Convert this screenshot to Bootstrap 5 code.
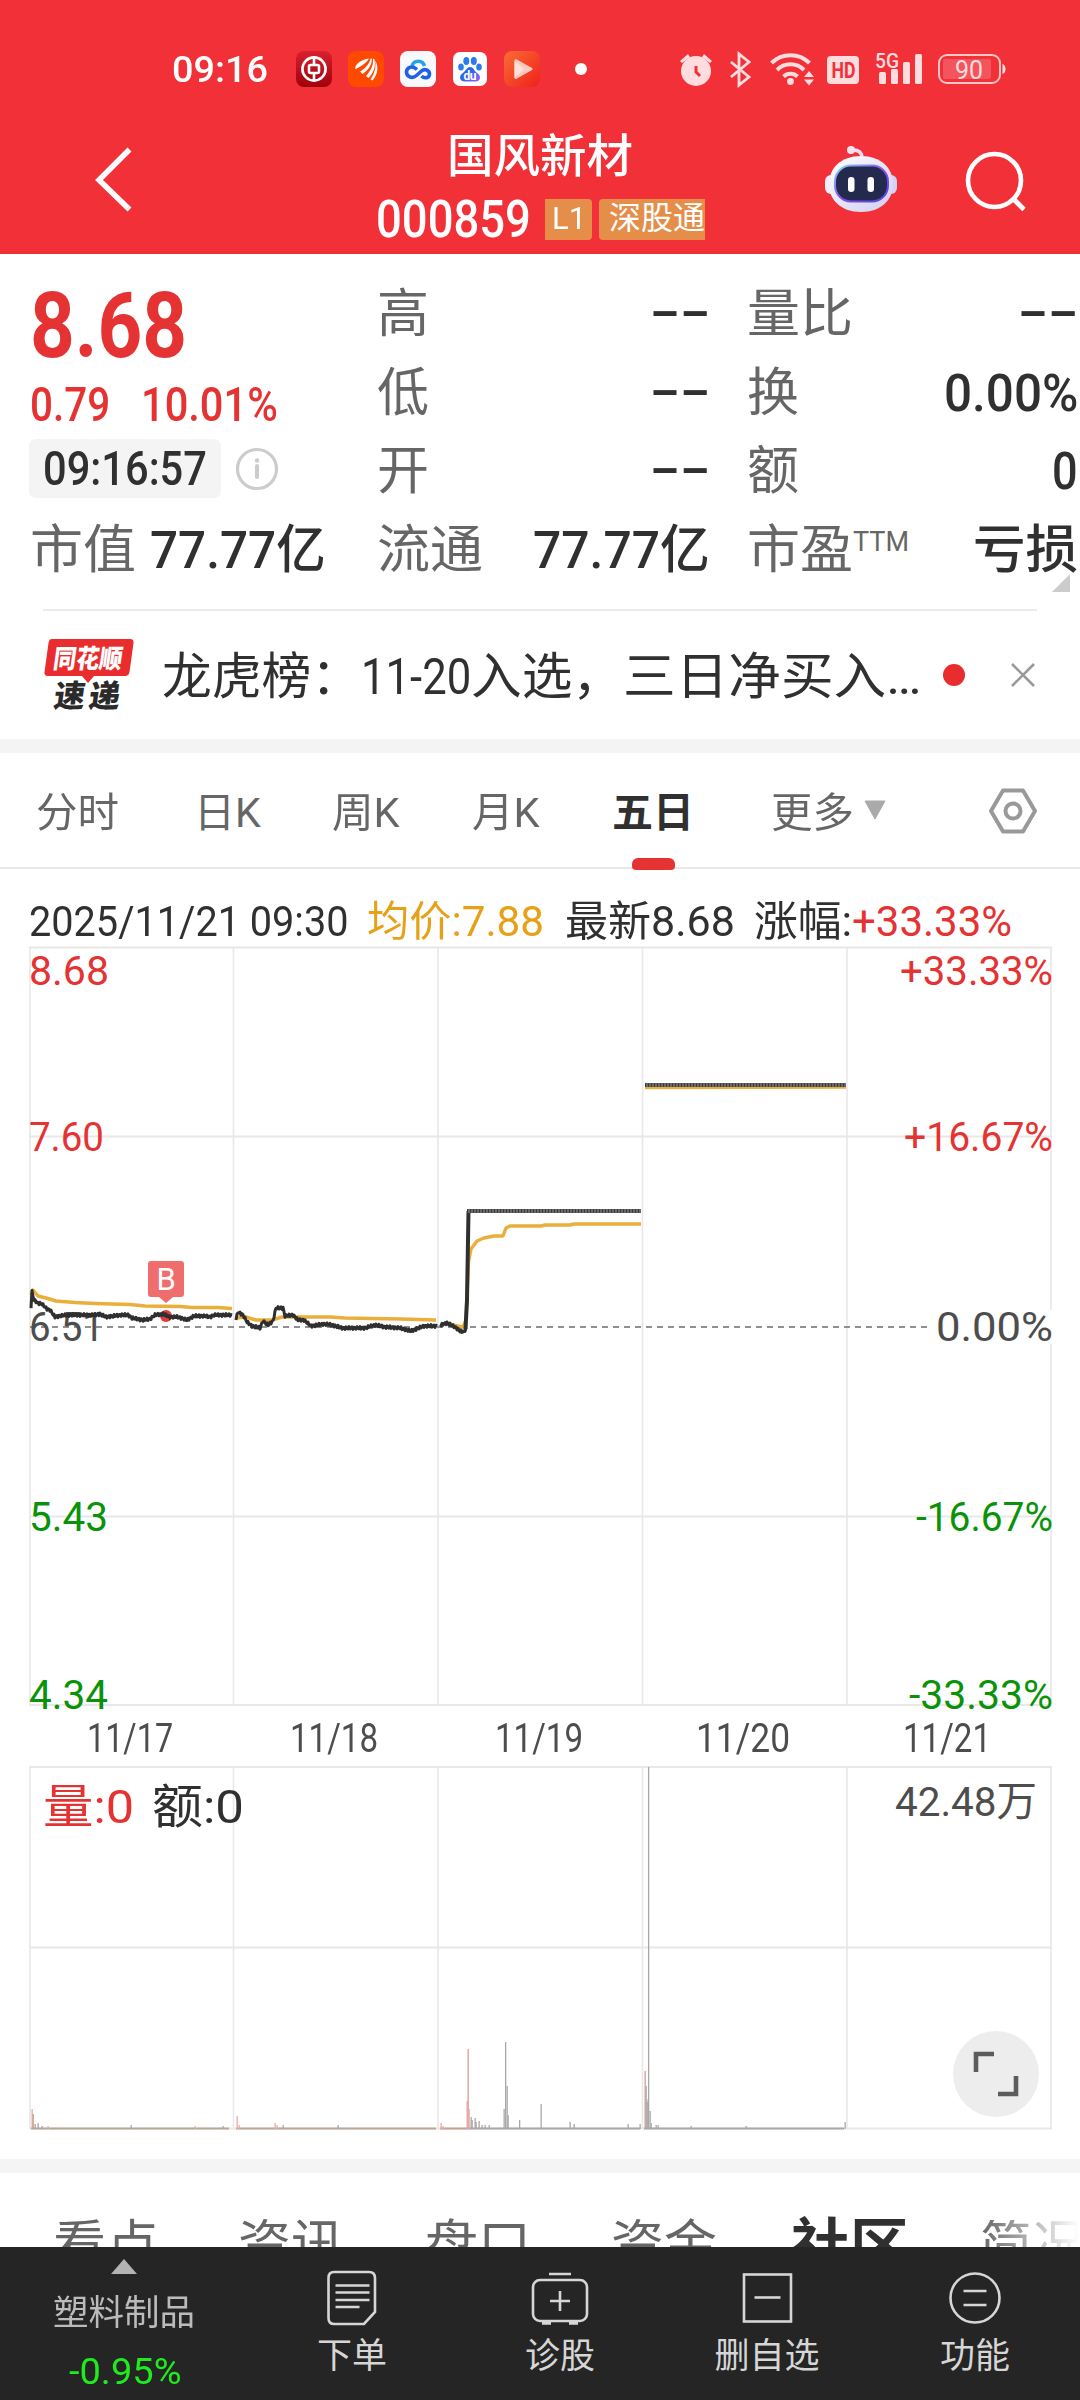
<!DOCTYPE html>
<html lang="zh-CN">
<head>
  <meta charset="UTF-8">
  <meta name="viewport" content="width=device-width, initial-scale=1">
  <title>国风新材 000859</title>
  <link href="https://cdn.jsdelivr.net/npm/bootstrap@5.3.0/dist/css/bootstrap.min.css" rel="stylesheet">
  <style>
    body {
      width: 1080px;
      height: 2400px;
      overflow: hidden;
      background: #fff;
      color: #303030;
      font-family: Roboto, "Noto Sans CJK SC", sans-serif;
      line-height: 1;
    }
    svg { display: block; flex: none; overflow: visible; }
    svg text { font-family: Roboto, "Noto Sans CJK SC", sans-serif; }

    /* text squeezed or stretched to the width in data-w */
    .fit {
      display: inline-block;
      flex: none;
      white-space: nowrap;
    }
    .up { color: #e53232; }
    .avg { color: #e6a117; }
    .muted { color: #666; }

    .top-bar { background: #f13038; height: 254px; color: #fff; }
    .status { height: 138px; padding-left: 172px; }
    .status .clock { font-size: 37px; font-weight: 500; margin-right: 28px; }
    .status .apps { gap: 16px; }
    .title-row { height: 116px; display: grid; grid-template-columns: 360px 360px 360px; }
    .stock-name { font-size: 46px; font-weight: 500; line-height: 48px; margin-top: -6px; }
    .stock-code { height: 42px; margin-top: 18px; }
    .stock-code .num { font-size: 51px; font-weight: 500; }
    .tag { background: #e48e49; height: 41px; font-size: 32px; line-height: 39px; padding-left: 7px; }

    .quote { height: 355px; padding: 22px 2px 0 30px; display: grid; grid-template-columns: 296px 334px 318px; column-gap: 50px; }
    .quote .col-c { margin-left: 1px; }
    .quote .col-r { margin-left: -13px; }
    .quote .line { height: 78.5px; display: flex; align-items: center; justify-content: space-between; }
    .quote .lbl { font-size: 52px; color: #666; }
    .quote .val { font-size: 52px; font-weight: 500; color: #303030; }
    .quote .dash { margin-top: -6px; }
    .price { font-size: 91px; font-weight: 700; height: 103px; padding-bottom: 3px; }
    .chg { font-size: 48px; font-weight: 500; height: 46px; gap: 31px; padding-top: 5px; }
    .time-row { height: 87px; gap: 15px; }
    .time-chip { width: 192px; height: 59px; margin-left: -1px; padding-left: 14px; border-radius: 7px; background: #f4f4f4; font-size: 49px; font-weight: 500; }
    .corner { position: absolute; right: 10px; top: 574px; }

    .news { height: 130px; margin: 0 43px; border-top: 2px solid #ebebeb; }
    .news .txt { font-size: 50px; margin: 4px 0 0 27px; }
    .strip { height: 14px; background: #f4f4f4; }

    .tabs { height: 116px; border-bottom: 2px solid #e8e8e8; padding: 6px 0 0 36px; font-size: 41px; color: #666; }
    .tabs .on { color: #303030; font-weight: 700; }
    .tabs .on::after { content: ""; position: absolute; left: 20px; bottom: -36px; width: 43px; height: 12px; border-radius: 6px 6px 4px 4px; background: #e53232; }

    .legend-row { height: 77px; padding: 28px 0 0 29px; font-size: 42px; }
    .dates { height: 60px; padding: 4px 31px 0 28px; font-size: 41px; color: #4d4d4d; }

    .sections { height: 74px; overflow: hidden; font-size: 52px; color: #666; padding: 47px 0 0 53px; }
    .sections .on { color: #303030; font-weight: 700; font-size: 58px; margin-top: -3px; }
    .fade-out { -webkit-mask-image: linear-gradient(90deg, #000, transparent 95%); mask-image: linear-gradient(90deg, #000, transparent 95%); }

    .dock { height: 153px; background: #252525; color: #d6d6d6; font-size: 35px; }
    .dock .cell { display: flex; flex-direction: column; align-items: center; }
    .dock .pct { color: #1fec1f; font-size: 37px; }
  </style>
</head>
<body>

  <header class="top-bar">
    <div class="status d-flex align-items-center">
      <span class="fit clock" data-w="96">09:16</span>
      <div class="apps d-flex">
        <svg width="36" height="36" viewBox="0 0 36 36">
          <defs><linearGradient id="boc" x2="0" y2="1"><stop offset="0" stop-color="#d9202f"/><stop offset="1" stop-color="#a0000c"/></linearGradient></defs>
          <rect width="36" height="36" rx="8" fill="url(#boc)"/>
          <g fill="none" stroke="#fff" stroke-width="2.6"><circle cx="18" cy="18" r="11.6"/><rect x="13" y="14" width="10" height="8" rx="1.5"/><path d="M18 6v8M18 22v8"/></g>
        </svg>
        <svg width="36" height="36" viewBox="0 0 36 36">
          <rect width="36" height="36" rx="8" fill="#ff4800"/>
          <g fill="#fff"><path d="M7 17.500C8 12 14 8.500 21 7.500 18 12.500 14 14.500 8 18z"/><path d="M12 20.500C18 17 21.500 12.500 22.500 7.500l1.500 0C24 14 20 19.500 14.500 23z"/><path d="M18 25C23 19.500 25.500 14 25 7.500l1.500.8C28 15.500 25.500 22 20.500 27z"/><path d="M22.500 28.500C27 22 28 16 27.300 9.500 31 16 29.500 24 24.500 29.500z"/></g>
        </svg>
        <svg width="36" height="36" viewBox="0 0 36 36">
          <rect width="36" height="36" rx="8" fill="#f9f9fb"/>
          <path d="M12 15a6.500 6.500 0 0 1 12.500 0" fill="none" stroke="#22a3ee" stroke-width="3.600"/>
          <path d="M17 19.500c-5.500-5-10.500-1.500-10.500 2.500 0 5 6 7 10 3.500l5-4.500c3-2.800 8-1 8 3 0 4-5 5-8 2" transform="translate(0 -1)" fill="none" stroke="#1f62e6" stroke-width="3.600"/>
        </svg>
        <svg width="36" height="36" viewBox="0 0 36 36">
          <defs><linearGradient id="paw" x2="1" y2="1"><stop offset=".4" stop-color="#2468ec"/><stop offset="1" stop-color="#a55cf0"/></linearGradient></defs>
          <rect x="1" y="1" width="34" height="34" rx="7" fill="#fff"/>
          <g fill="#2b7bee"><ellipse cx="9" cy="16" rx="2.800" ry="3.600"/><ellipse cx="14.300" cy="10" rx="3" ry="3.900"/><ellipse cx="21.800" cy="10" rx="3" ry="3.900"/><ellipse cx="27" cy="16" rx="2.800" ry="3.600"/></g>
          <path d="M18 16c3 0 4 3 6 5s4 3 4 5.500c0 3-2.500 4-5 4H13c-3 0-5-1.500-5-4s2-4 4-5.500 3-5 6-5z" fill="url(#paw)"/>
          <text x="11.500" y="29" font-size="12" font-weight="700" fill="#fff" textLength="13">du</text>
        </svg>
        <svg width="36" height="36" viewBox="0 0 36 36">
          <defs><linearGradient id="vid" x2="1" y2="1"><stop offset="0" stop-color="#fb6c35"/><stop offset="1" stop-color="#ee211c"/></linearGradient></defs>
          <rect width="36" height="36" rx="8" fill="url(#vid)"/>
          <path d="M12 8l16 9q1.500 1 0 2l-16 9q-1.500 0-1.500-1.500V9.500Q10.500 8 12 8z" fill="#ffc9be"/><path d="M10.500 10l9.500 8-9.500 9z" fill="#ffe1d8"/>
        </svg>
      </div>
      <svg width="12" height="12" style="margin-left:35px"><circle cx="6" cy="6" r="6" fill="#fff"/></svg>
      <svg width="330" height="40" viewBox="678 49 330 40" style="margin-left:91px">
        <g fill="#ffdcde">
          <circle cx="696" cy="71" r="15"/>
          <path d="M680 61l8-7 2 3-8 6zM712 61l-8-7-2 3 8 6z"/>
          <path d="M696 66v6l4 4" fill="none" stroke="#f13038" stroke-width="3"/>
          <path d="M731 62l18 15-10 8V54l10 8-18 15" fill="none" stroke="#ffdcde" stroke-width="2.800"/>
          <g fill="none" stroke="#ffdcde" stroke-width="4"><path d="M771.500 63a27 27 0 0 1 38 0"/><path d="M777 70a19 19 0 0 1 27 0"/><path d="M783.500 76.500a10 10 0 0 1 14 0"/></g>
          <circle cx="790.500" cy="81.500" r="3.400"/>
          <path d="M804 77l5-6 5 6zM804 79.500h10l-5 6z"/>
          <rect x="827" y="56" width="32" height="28" rx="4"/>
          <text x="831.500" y="77.800" font-size="22" font-weight="700" fill="#f13038" textLength="24" lengthAdjust="spacingAndGlyphs">HD</text>
          <text x="875" y="67.500" font-size="21" font-weight="500" textLength="24" lengthAdjust="spacingAndGlyphs">5G</text>
          <rect x="879" y="72" width="7" height="12" rx="1.500"/><rect x="891" y="69" width="7" height="15" rx="1.500"/><rect x="903" y="62" width="7" height="22" rx="1.500"/><rect x="915" y="54" width="7" height="30" rx="1.500"/>
          <rect x="939" y="55" width="61" height="28" rx="8" fill="none" stroke="#ffc4c6" stroke-width="2"/>
          <rect x="943" y="59" width="48" height="20" rx="2" fill="#f4545b"/>
          <path d="M1002.500 64q3 1 3 5t-3 5z"/>
          <text x="955" y="78.500" font-size="26" textLength="28" lengthAdjust="spacingAndGlyphs">90</text>
        </g>
      </svg>
    </div>

    <div class="title-row">
      <div style="padding:9px 0 0 95px">
        <svg width="38" height="66" viewBox="95 147 38 66"><path d="M129.500 149.500L99 180l30.500 29.500" fill="none" stroke="#fff" stroke-width="5.500"/></svg>
      </div>
      <div class="text-center">
        <div class="stock-name"><span class="fit" data-w="186">国风新材</span></div>
        <div class="stock-code d-flex align-items-center" style="padding-left:16px">
          <span class="fit num" data-w="155">000859</span>
          <span class="tag rounded-end-1" style="width:47px;margin-left:14px;text-align:left"><span class="fit" data-w="34">L1</span></span>
          <span class="tag rounded-start-1" style="width:106px;margin-left:7px;padding-left:10px;text-align:left"><span class="fit" data-w="96">深股通</span></span>
        </div>
      </div>
      <div class="d-flex">
        <svg width="74" height="72" viewBox="824 143 74 72" style="margin:5px 0 0 104px">
          <defs>
            <linearGradient id="shell" x2="1" y2="1"><stop offset="0" stop-color="#fff"/><stop offset="1" stop-color="#cfcdf0"/></linearGradient>
            <linearGradient id="rim" x2="1" y2="1"><stop offset="0" stop-color="#7fdcf0"/><stop offset=".5" stop-color="#8a4cf0"/><stop offset="1" stop-color="#4f46d8"/></linearGradient>
          </defs>
          <path d="M862 158q0-8-9-8" fill="none" stroke="#ecdcf0" stroke-width="3.500"/><circle cx="851" cy="150" r="4" fill="#f4e4f0"/>
          <rect x="825" y="175" width="14" height="19" rx="6" fill="#f0eefc"/><rect x="883" y="175" width="14" height="19" rx="6" fill="#d4d2f4"/>
          <path d="M861 156c20 0 32 12 32 28s-12 28-32 28-32-12-32-28 12-28 32-28z" fill="url(#shell)"/>
          <rect x="835" y="165.500" width="53" height="36" rx="16" fill="#232a4d" stroke="url(#rim)" stroke-width="2"/>
          <rect x="848" y="177" width="6.500" height="15" rx="3.200" fill="#fff"/><rect x="867.500" y="177" width="6.500" height="15" rx="3.200" fill="#fff"/>
        </svg>
        <svg width="64" height="64" viewBox="964 150 64 64" style="margin:12px 0 0 66px"><g fill="none" stroke="#fff" stroke-width="4.600"><circle cx="994.500" cy="180.500" r="26.500"/><path d="M1013 198.500l11 11" stroke-width="4.800"/></g></svg>
      </div>
    </div>
  </header>

  <section class="quote">
    <div>
      <div class="price up d-flex align-items-center"><span class="fit" data-w="157">8.68</span></div>
      <div class="chg up d-flex align-items-center"><span class="fit" data-w="80">0.79</span><span class="fit" data-w="137">10.01%</span></div>
      <div class="time-row d-flex align-items-center">
        <div class="time-chip d-flex align-items-center"><span class="fit" data-w="164">09:16:57</span></div>
        <svg width="42" height="44" viewBox="0 0 42 44"><circle cx="21" cy="22" r="19.500" fill="none" stroke="#ccc" stroke-width="3.200"/><circle cx="21" cy="13.500" r="2.200" fill="#ccc"/><path d="M21 19v11" stroke="#ccc" stroke-width="4" stroke-linecap="round"/></svg>
      </div>
      <div class="line"><span class="fit lbl" data-w="106">市值</span><span class="fit val" data-w="176">77.77亿</span></div>
    </div>
    <div class="col-c">
      <div class="line"><span class="lbl">高</span><span class="fit val dash" data-w="60">--</span></div>
      <div class="line"><span class="lbl">低</span><span class="fit val dash" data-w="60">--</span></div>
      <div class="line"><span class="lbl">开</span><span class="fit val dash" data-w="60">--</span></div>
      <div class="line"><span class="fit lbl" data-w="106">流通</span><span class="fit val" data-w="177">77.77亿</span></div>
    </div>
    <div class="col-r">
      <div class="line"><span class="fit lbl" data-w="106">量比</span><span class="fit val dash" data-w="60">--</span></div>
      <div class="line"><span class="lbl">换</span><span class="fit val" data-w="134">0.00%</span></div>
      <div class="line"><span class="lbl">额</span><span class="fit val" data-w="26">0</span></div>
      <div class="line"><span class="d-flex"><span class="fit lbl" data-w="106">市盈</span><span class="muted" style="font-size:27px;margin-top:4px">TTM</span></span><span class="fit val" data-w="105">亏损</span></div>
    </div>
    <svg class="corner" width="18" height="18"><path d="M18 0v18H0z" fill="#ccc"/></svg>
  </section>

  <section class="news d-flex align-items-center">
    <svg width="92" height="76" viewBox="42 636 92 76">
      <path d="M51 638h78q4 0 3.500 4l-4 29q-.6 4-4.500 4H93l-6 7-6-7H47q-4 0-3.500-4l4-29q.6-4 3.500-4z" fill="#e92c2e"/>
      <g transform="skewX(-8)" font-weight="900">
        <text x="145" y="667" font-size="26" fill="#fff" textLength="69" lengthAdjust="spacingAndGlyphs">同花顺</text>
        <text x="151" y="706" font-size="31" fill="#2b2b2b" textLength="66">速递</text>
      </g>
    </svg>
    <div class="txt d-flex"><span class="fit" data-w="199">龙虎榜：</span><span class="fit" data-w="110">11-20</span><span class="fit" data-w="152">入选，</span><span class="fit" data-w="298">三日净买入…</span></div>
    <svg width="22" height="22" style="margin-left:22px"><circle cx="11" cy="11" r="11" fill="#e92c2e"/></svg>
    <svg width="24" height="24" style="margin-left:46px"><path d="M1 1l22 22M23 1L1 23" stroke="#999" stroke-width="2.600"/></svg>
  </section>

  <div class="strip"></div>

  <nav class="tabs d-flex align-items-center">
    <span class="fit" data-w="83">分时</span>
    <span class="fit" style="margin-left:75px" data-w="67">日K</span>
    <span class="fit" style="margin-left:71px" data-w="68">周K</span>
    <span class="fit" style="margin-left:72px" data-w="68">月K</span>
    <span class="on position-relative" style="margin-left:72px">五日</span>
    <span class="fit" style="margin-left:77px" data-w="83">更多</span>
    <svg width="22" height="20" style="margin-left:10px;margin-top:-6px"><path d="M1 1h20L11 19z" fill="#aaa" stroke="#aaa"/></svg>
    <svg width="50" height="48" viewBox="0 0 50 48" style="margin-left:102px;margin-top:-4px"><g fill="none" stroke="#999" stroke-width="4"><path d="M15 3.500h20L47 24 35 44.500H15L3 24z" stroke-linejoin="round"/><circle cx="25" cy="24" r="7.500"/></g></svg>
  </nav>

  <div class="legend-row d-flex align-items-center">
    <span class="fit" data-w="320">2025/11/21 09:30</span>
    <span class="fit avg" style="margin-left:18px" data-w="177">均价:7.88</span>
    <span class="fit" style="margin-left:21px" data-w="170">最新8.68</span>
    <span class="fit" style="margin-left:19px" data-w="98">涨幅:</span>
    <span class="fit up" data-w="160">+33.33%</span>
  </div>

  <svg width="1080" height="760" viewBox="0 946 1080 760" id="priceChart">
    <g stroke="#e8e8e8" stroke-width="2" fill="none" id="priceGrid">
      <path d="M29 947.500H1052M29 1136.500H1052M29 1516.500H1052M29 1705H1052"/>
      <path d="M30 947V1705M233.500 947V1705M438 947V1705M642.500 947V1705M847 947V1705M1051 947V1705" stroke-width="1.600"/>
    </g>
    <path d="M30 1327H1051" stroke="#909090" stroke-width="1.800" stroke-dasharray="6 5"/>
    <g font-size="40" fill="#e53232">
      <text x="29" y="985" textLength="80" lengthAdjust="spacingAndGlyphs">8.68</text>
      <text x="29" y="1151" textLength="75" lengthAdjust="spacingAndGlyphs">7.60</text>
      <text x="29" y="1341" fill="#4d4d4d" textLength="75" lengthAdjust="spacingAndGlyphs">6.51</text>
      <text x="29" y="1531" fill="#0a930a" textLength="79" lengthAdjust="spacingAndGlyphs">5.43</text>
      <text x="29" y="1709" fill="#0a930a" textLength="79" lengthAdjust="spacingAndGlyphs">4.34</text>
      <text x="900" y="985" textLength="153" lengthAdjust="spacingAndGlyphs">+33.33%</text>
      <text x="904" y="1151" textLength="149" lengthAdjust="spacingAndGlyphs">+16.67%</text>
      <rect x="932" y="1310" width="122" height="34" fill="#fff"/>
      <text x="936" y="1341" fill="#4d4d4d" textLength="117" lengthAdjust="spacingAndGlyphs">0.00%</text>
      <text x="916" y="1531" fill="#0a930a" textLength="137" lengthAdjust="spacingAndGlyphs">-16.67%</text>
      <text x="909" y="1709" fill="#0a930a" textLength="144" lengthAdjust="spacingAndGlyphs">-33.33%</text>
    </g>
    <g fill="none" stroke="#e9af3a" stroke-width="3.400" stroke-linejoin="round">
      <path d="M31 1295L33 1290L38 1296L46 1298L56 1301L75 1302.500L95 1303.500L130 1304.500L145 1306L180 1306.500L192 1307.500L218 1307.500L232 1308.500"/>
      <path d="M236 1318L246 1317L256 1320L272 1320L282 1317L330 1317L345 1318L400 1319L436 1320"/>
      <path d="M447 1324L463 1327L466 1320L468.500 1262L471 1249L477 1241L484 1238L494 1236L503 1236L506 1228L510 1226L541 1226L545 1225L570 1225L574 1224L641 1224"/>
      <path d="M645 1087.500L846 1087"/>
    </g>
    <circle cx="166" cy="1316" r="6" fill="#e23b3b"/>
    <g fill="none" stroke="#2f2f2f" stroke-width="3" stroke-linejoin="round" id="ticks"></g>
    <path d="M465.500 1329L467 1300L468.500 1211" fill="none" stroke="#2f2f2f" stroke-width="4"/>
    <g stroke="#686868" stroke-width="4"><path d="M467 1211H641"/><path d="M645 1085H846"/></g>
    <g stroke="#3c3c3c" stroke-width="4" stroke-dasharray="1 2"><path d="M467 1211H641"/><path d="M645 1085H846"/></g>
    <path d="M151 1261h30q3 0 3 3v30q0 3-3 3h-8l-7 6-7-6h-8q-3 0-3-3v-30q0-3 3-3z" fill="#f06d6e"/>
    <text x="156.500" y="1290" font-size="31" fill="#fff">B</text>
  </svg>

  <div class="dates d-flex align-items-center text-center">
    <div class="flex-fill w-100"><span class="fit" data-w="86">11/17</span></div>
    <div class="flex-fill w-100"><span class="fit" data-w="88">11/18</span></div>
    <div class="flex-fill w-100"><span class="fit" data-w="88">11/19</span></div>
    <div class="flex-fill w-100"><span class="fit" data-w="94">11/20</span></div>
    <div class="flex-fill w-100"><span class="fit" data-w="88">11/21</span></div>
  </div>

  <svg width="1080" height="393" viewBox="0 1766 1080 393">
    <g stroke="#e8e8e8" stroke-width="2" fill="none">
      <path d="M29 1767H1052M29 1947.500H1052M29 2128.500H1052"/>
      <path d="M30 1767V2129M233.500 1767V2129M438 1767V2129M642.500 1767V2129M847 1767V2129M1051 1767V2129" stroke-width="1.600"/>
    </g>
    <g id="volume"></g>
    <text x="43" y="1823" font-size="47" fill="#e53232" textLength="91" lengthAdjust="spacingAndGlyphs">量:0</text>
    <text x="152" y="1823" font-size="47" fill="#303030" textLength="92" lengthAdjust="spacingAndGlyphs">额:0</text>
    <text x="895" y="1816" font-size="41" fill="#4d4d4d" textLength="142" lengthAdjust="spacingAndGlyphs">42.48万</text>
    <circle cx="996" cy="2074" r="43" fill="#ededed"/>
    <path d="M976 2072V2054H994M998 2094H1016V2076" fill="none" stroke="#5c5c5c" stroke-width="4.600"/>
  </svg>

  <div class="strip"></div>

  <nav class="sections d-flex align-items-start">
    <span class="fit" data-w="106">看点</span>
    <span class="fit" style="margin-left:79px" data-w="106">资讯</span>
    <span class="fit" style="margin-left:81px" data-w="106">盘口</span>
    <span class="fit" style="margin-left:80px" data-w="106">资金</span>
    <span class="fit on" style="margin-left:74px" data-w="118">社区</span>
    <span class="fit fade-out" style="margin-left:71px" data-w="104">简况</span>
  </nav>

  <footer class="dock d-flex">
    <div class="cell" style="width:248px;color:#bbb;padding-top:12px">
      <svg width="26" height="15"><path d="M13 0l13 15H0z" fill="#b3b3b3"/></svg>
      <span class="fit" style="margin-top:22px" data-w="142">塑料制品</span>
      <span class="fit pct" style="margin:22px 0 0 2px" data-w="112">-0.95%</span>
    </div>
    <div class="cell" style="width:208px;padding-top:22px">
      <svg width="52" height="58" viewBox="0 0 52 58"><g fill="none" stroke="#d6d6d6" stroke-width="2.600"><path d="M8 3h35q6 0 6 6v34L38 55H8q-5.500 0-5.500-6V9Q2.500 3 8 3z"/><path d="M9.500 16.500h34M9.500 23.500h34M9.500 31h34M9.500 38h24"/></g></svg>
      <span style="margin-top:12px">下单</span>
    </div>
    <div class="cell" style="width:208px;padding-top:22px">
      <svg width="60" height="58" viewBox="0 0 60 58"><g fill="none" stroke="#d6d6d6" stroke-width="2.600"><rect x="3" y="11" width="54" height="41" rx="7"/><path d="M19 5h22M30 22v20M20 32h20"/><path d="M12 54h9M39 54h9" stroke-width="3.500"/></g></svg>
      <span style="margin-top:12px">诊股</span>
    </div>
    <div class="cell" style="width:206px;padding-top:22px">
      <svg width="52" height="58" viewBox="0 0 52 58"><g fill="none" stroke="#d6d6d6" stroke-width="2.600"><rect x="3" y="5.500" width="47" height="47"/><path d="M13.500 28.500h26"/></g></svg>
      <span style="margin-top:12px">删自选</span>
    </div>
    <div class="cell" style="width:210px;padding-top:22px">
      <svg width="52" height="58" viewBox="0 0 52 58"><g fill="none" stroke="#d6d6d6" stroke-width="2.600"><circle cx="26" cy="29" r="24.500"/><path d="M14.500 22h23M14.500 36h23"/></g></svg>
      <span style="margin-top:12px">功能</span>
    </div>
  </footer>

  <script src="https://cdn.jsdelivr.net/npm/bootstrap@5.3.0/dist/js/bootstrap.bundle.min.js"></script>
  <script>
    // scale each label horizontally to its data-w
    document.querySelectorAll('.fit').forEach(function (el) {
      const w = Number(el.dataset.w);
      const natural = el.offsetWidth;
      el.style.width = w + 'px';
      el.style.textAlign = 'left';
      // the box keeps width w, the scale is applied on an inner span
      const inner = document.createElement('span');
      inner.style.display = 'inline-block';
      inner.style.transformOrigin = '0 50%';
      inner.style.transform = 'scaleX(' + (w / natural) + ')';
      inner.textContent = el.textContent;
      el.textContent = '';
      el.appendChild(inner);
    });

    const NS = 'http://www.w3.org/2000/svg';
    function add(parent, tag, attrs) {
      const node = document.createElementNS(NS, tag);
      for (const k in attrs) node.setAttribute(k, attrs[k]);
      parent.appendChild(node);
    }

    // minute prices, one polyline a day, with small tick noise between the knots
    const days = [
      [[31,1307],[32,1292],[34,1300],[38,1303],[42,1304],[47,1309],[50,1310],[55,1317],[59,1316],[66,1315],[95,1315],[100,1314],[106,1317],[120,1315],[128,1315],[132,1318],[143,1320],[150,1319],[155,1315],[163,1314],[170,1317],[178,1317],[187,1320],[194,1316],[205,1316],[210,1317],[214,1315],[232,1315]],
      [[236,1319],[238,1312],[243,1315],[247,1322],[252,1326],[260,1328],[263,1321],[268,1325],[273,1321],[276,1308],[283,1308],[285,1316],[293,1315],[298,1320],[304,1320],[311,1326],[324,1324],[332,1325],[342,1328],[365,1328],[375,1325],[385,1327],[400,1328],[411,1331],[424,1326],[437,1326]],
      [[440,1326],[443,1324],[447,1323],[455,1327],[460,1331],[464,1332],[466,1328]]
    ];
    const ticks = document.getElementById('ticks');
    days.forEach(function (knots) {
      const pts = [];
      for (let i = 0; i < knots.length - 1; i++) {
        const [x0, y0] = knots[i], [x1, y1] = knots[i + 1];
        for (let x = x0; x < x1; x++) {
          const y = y0 + (y1 - y0) * (x - x0) / (x1 - x0);
          pts.push(x + ',' + (y + Math.sin(x * 2.3) * 1.4).toFixed(1));
        }
      }
      pts.push(knots[knots.length - 1].join(','));
      add(ticks, 'polyline', { points: pts.join(' ') });
    });

    // volume bars: x, height, colour
    const P = '#f0a9a9', G = '#a8a8a8';
    const bars = [
      [32,20,P],[33,15,'#b99f85'],[35,5,G],[38,6,G],[42,3,G],[48,3,P],[131,4,G],[195,3,P],[223,3,G],
      [237,13,P],[239,4,P],[275,6,P],[277,4,P],[283,4,G],[338,4,G],
      [441,6,P],[443,3,P],[467,28,P],[468,80,'#d99a9a'],[469,20,P],[471,12,G],[472,9,G],[475,11,G],[476,7,G],[479,8,G],[482,4,G],[485,4,G],[489,4,G],
      [504,20,G],[505.5,87,G],[507,43,G],[508,14,G],[519.5,9,G],[541,25,G],[570,7,G],[574,5,G],[628,5,G],[640,5,G],
      [645,58,'#d99a9a'],[646,43,G],[647,27,G],[648,30,G],[648.5,362,G],[650,18,G],[651,6,G],[656,4,G],[658,4,G],[691,3,G],[746,3,G],[845,7,G]
    ];
    const volume = document.getElementById('volume');
    [[31,229,'#b7a795'],[236,436,'#bba898'],[440,466,'#c7a293'],[466,640,'#a8a8a8'],[644,844,'#a8a8a8']].forEach(function (b) {
      add(volume, 'rect', { x: b[0], y: 2127.5, width: b[1] - b[0], height: 2, fill: b[2] });
    });
    bars.forEach(function (b) {
      add(volume, 'rect', { x: b[0] - 0.5, y: 2129 - b[1], width: 1.3, height: b[1], fill: b[2] });
    });
  </script>

</body>
</html>
